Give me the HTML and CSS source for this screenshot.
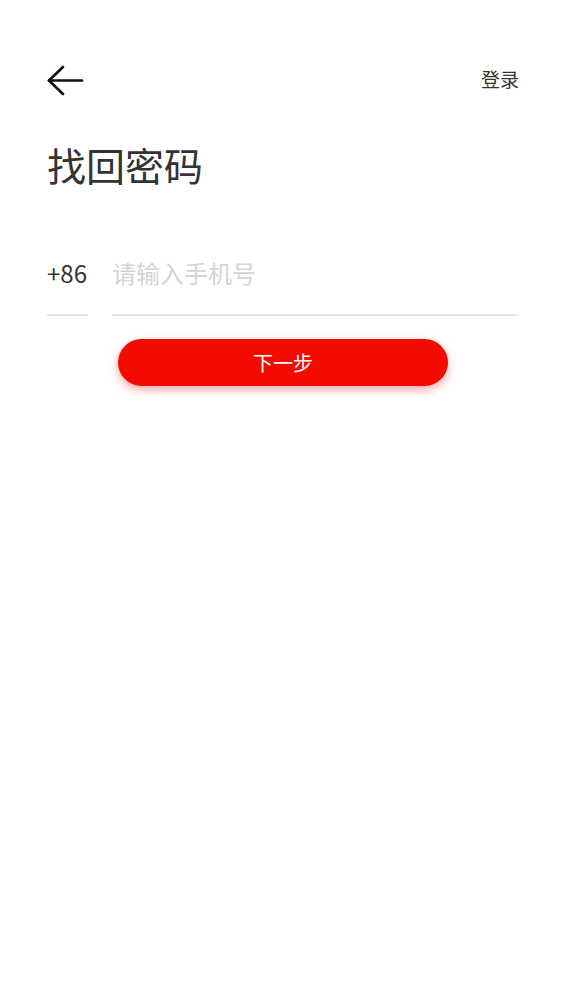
FILE: index.html
```html
<!DOCTYPE html>
<html lang="zh">
<head>
<meta charset="utf-8">
<title>找回密码</title>
<link rel="stylesheet" href="styles.css">
</head>
<body>
<div class="page">
  <header class="topbar">
    <button class="back" aria-label="返回">
      <svg width="37" height="31" viewBox="0 0 37 31" fill="none" stroke="#111" stroke-width="2.7" stroke-linecap="round" stroke-linejoin="round">
        <path d="M2 15.5H35"/>
        <path d="M16 2L2 15.5L16 29"/>
      </svg>
    </button>
    <a class="login">登录</a>
  </header>
  <h1 class="title">找回密码</h1>
  <div class="phone-row">
    <div class="prefix">+86</div>
    <div class="field"><span class="placeholder">请输入手机号</span></div>
  </div>
  <button class="next">下一步</button>
</div>
</body>
</html>
```

FILE: styles.css
```css
* { box-sizing: border-box; }
html, body { margin: 0; padding: 0; background: #fff; }
body {
  font-family: "Noto Sans CJK SC", "Noto Sans", sans-serif;
  color: #333;
  width: 566px;
  height: 1006px;
}
.page { padding: 0 47px; }
.topbar {
  display: flex;
  align-items: center;
  justify-content: space-between;
  height: 40px;
  margin-top: 60px;
}
.back {
  border: 0;
  background: none;
  padding: 0;
  display: flex;
  width: 37px;
  height: 31px;
}
.login {
  font-size: 19px;
  color: #333;
  line-height: 22px;
  margin-bottom: 2px;
}
.title {
  margin: 40px 0 0 0;
  font-size: 39px;
  font-weight: 400;
  line-height: 48px;
  color: #333;
}
.phone-row {
  display: flex;
  gap: 24px;
  margin-top: 67px;
}
.prefix, .field {
  height: 61px;
  border-bottom: 2px solid #e6e6e6;
  line-height: 36px;
}
.prefix {
  width: 41px;
  font-size: 24px;
  color: #333;
}
.field { flex: 1; }
.placeholder {
  font-size: 24px;
  color: #d4d4d4;
}
.next {
  display: block;
  margin: 23px auto 0;
  width: 330px;
  height: 47px;
  border: 0;
  border-radius: 24px;
  background: #f30b00;
  color: #fff;
  font-family: "Noto Sans CJK SC", "Noto Sans", sans-serif;
  font-size: 20px;
  box-shadow: 0 4px 10px rgba(243, 11, 0, 0.35);
}
```
